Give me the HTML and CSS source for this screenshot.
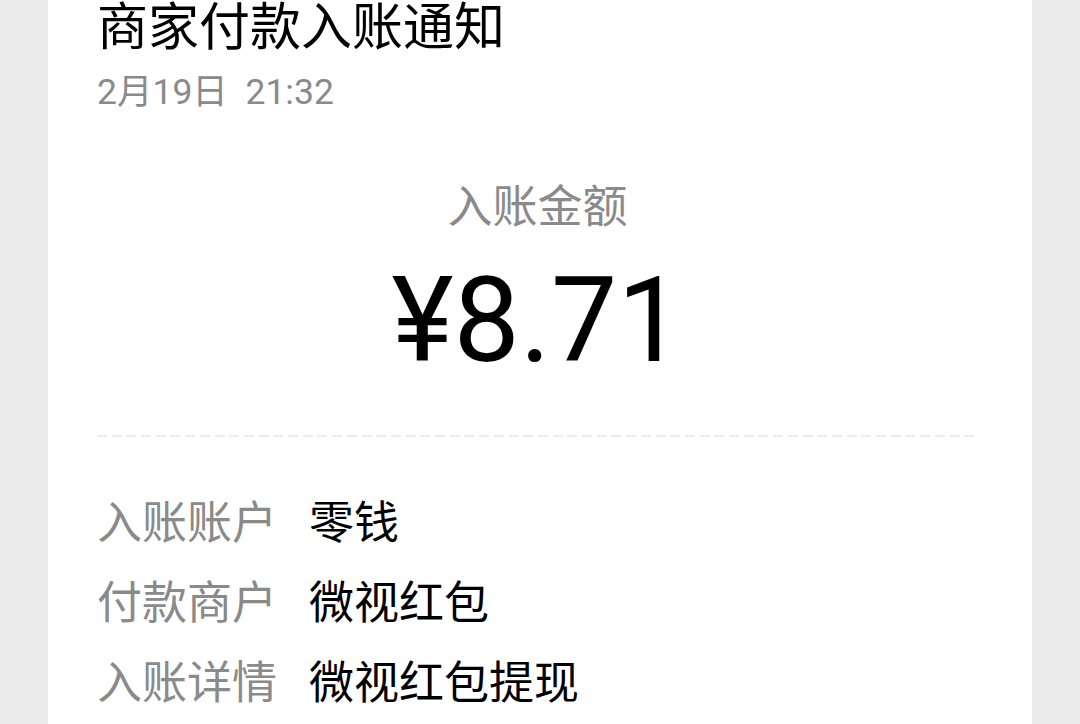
FILE: index.html
```html
<!DOCTYPE html>
<html lang="zh-CN">
<head>
<meta charset="utf-8">
<title>商家付款入账通知</title>
<link rel="stylesheet" href="styles.css">
</head>
<body>
<div class="card">
  <div class="title">商家付款入账通知</div>
  <div class="date">2月19日&nbsp;&nbsp;21:32</div>
  <div class="amount-label">入账金额</div>
  <div class="amount">¥8.71</div>
  <div class="divider"></div>
  <div class="rows">
    <div class="row"><span class="label">入账账户</span><span class="value">零钱</span></div>
    <div class="row"><span class="label">付款商户</span><span class="value">微视红包</span></div>
    <div class="row"><span class="label">入账详情</span><span class="value">微视红包提现</span></div>
  </div>
</div>
</body>
</html>
```
FILE: styles.css
```css
html, body {
  margin: 0;
  padding: 0;
  background: #ebebeb;
  font-family: Roboto, "Noto Sans CJK SC", sans-serif;
  overflow: hidden;
  height: 724px;
}
.card {
  background: #ffffff;
  margin: 0 48px;
  padding: 0 54px 40px 49px;
  min-height: 760px;
  box-sizing: border-box;
}
.title {
  font-size: 51px;
  line-height: 56px;
  color: #000;
}
.date {
  font-size: 35.5px;
  line-height: 44px;
  color: #8a8a8a;
  margin-top: 14px;
}
.amount-label {
  text-align: center;
  font-size: 45px;
  line-height: 56px;
  color: #8a8a8a;
  margin-top: 66px;
}
.amount {
  text-align: center;
  font-size: 118px;
  line-height: 130px;
  color: #000;
  margin-top: 20px;
}
.divider {
  height: 2px;
  margin-top: 49px;
  background: repeating-linear-gradient(to right, #ececec 0 10px, transparent 10px 14.7px);
}
.rows {
  display: flex;
  flex-direction: column;
  gap: 24px;
  margin-top: 59px;
}
.row {
  display: flex;
  font-size: 45px;
  line-height: 56px;
}
.label {
  color: #8a8a8a;
  width: 212px;
  flex: none;
}
.value {
  color: #000;
}
```
